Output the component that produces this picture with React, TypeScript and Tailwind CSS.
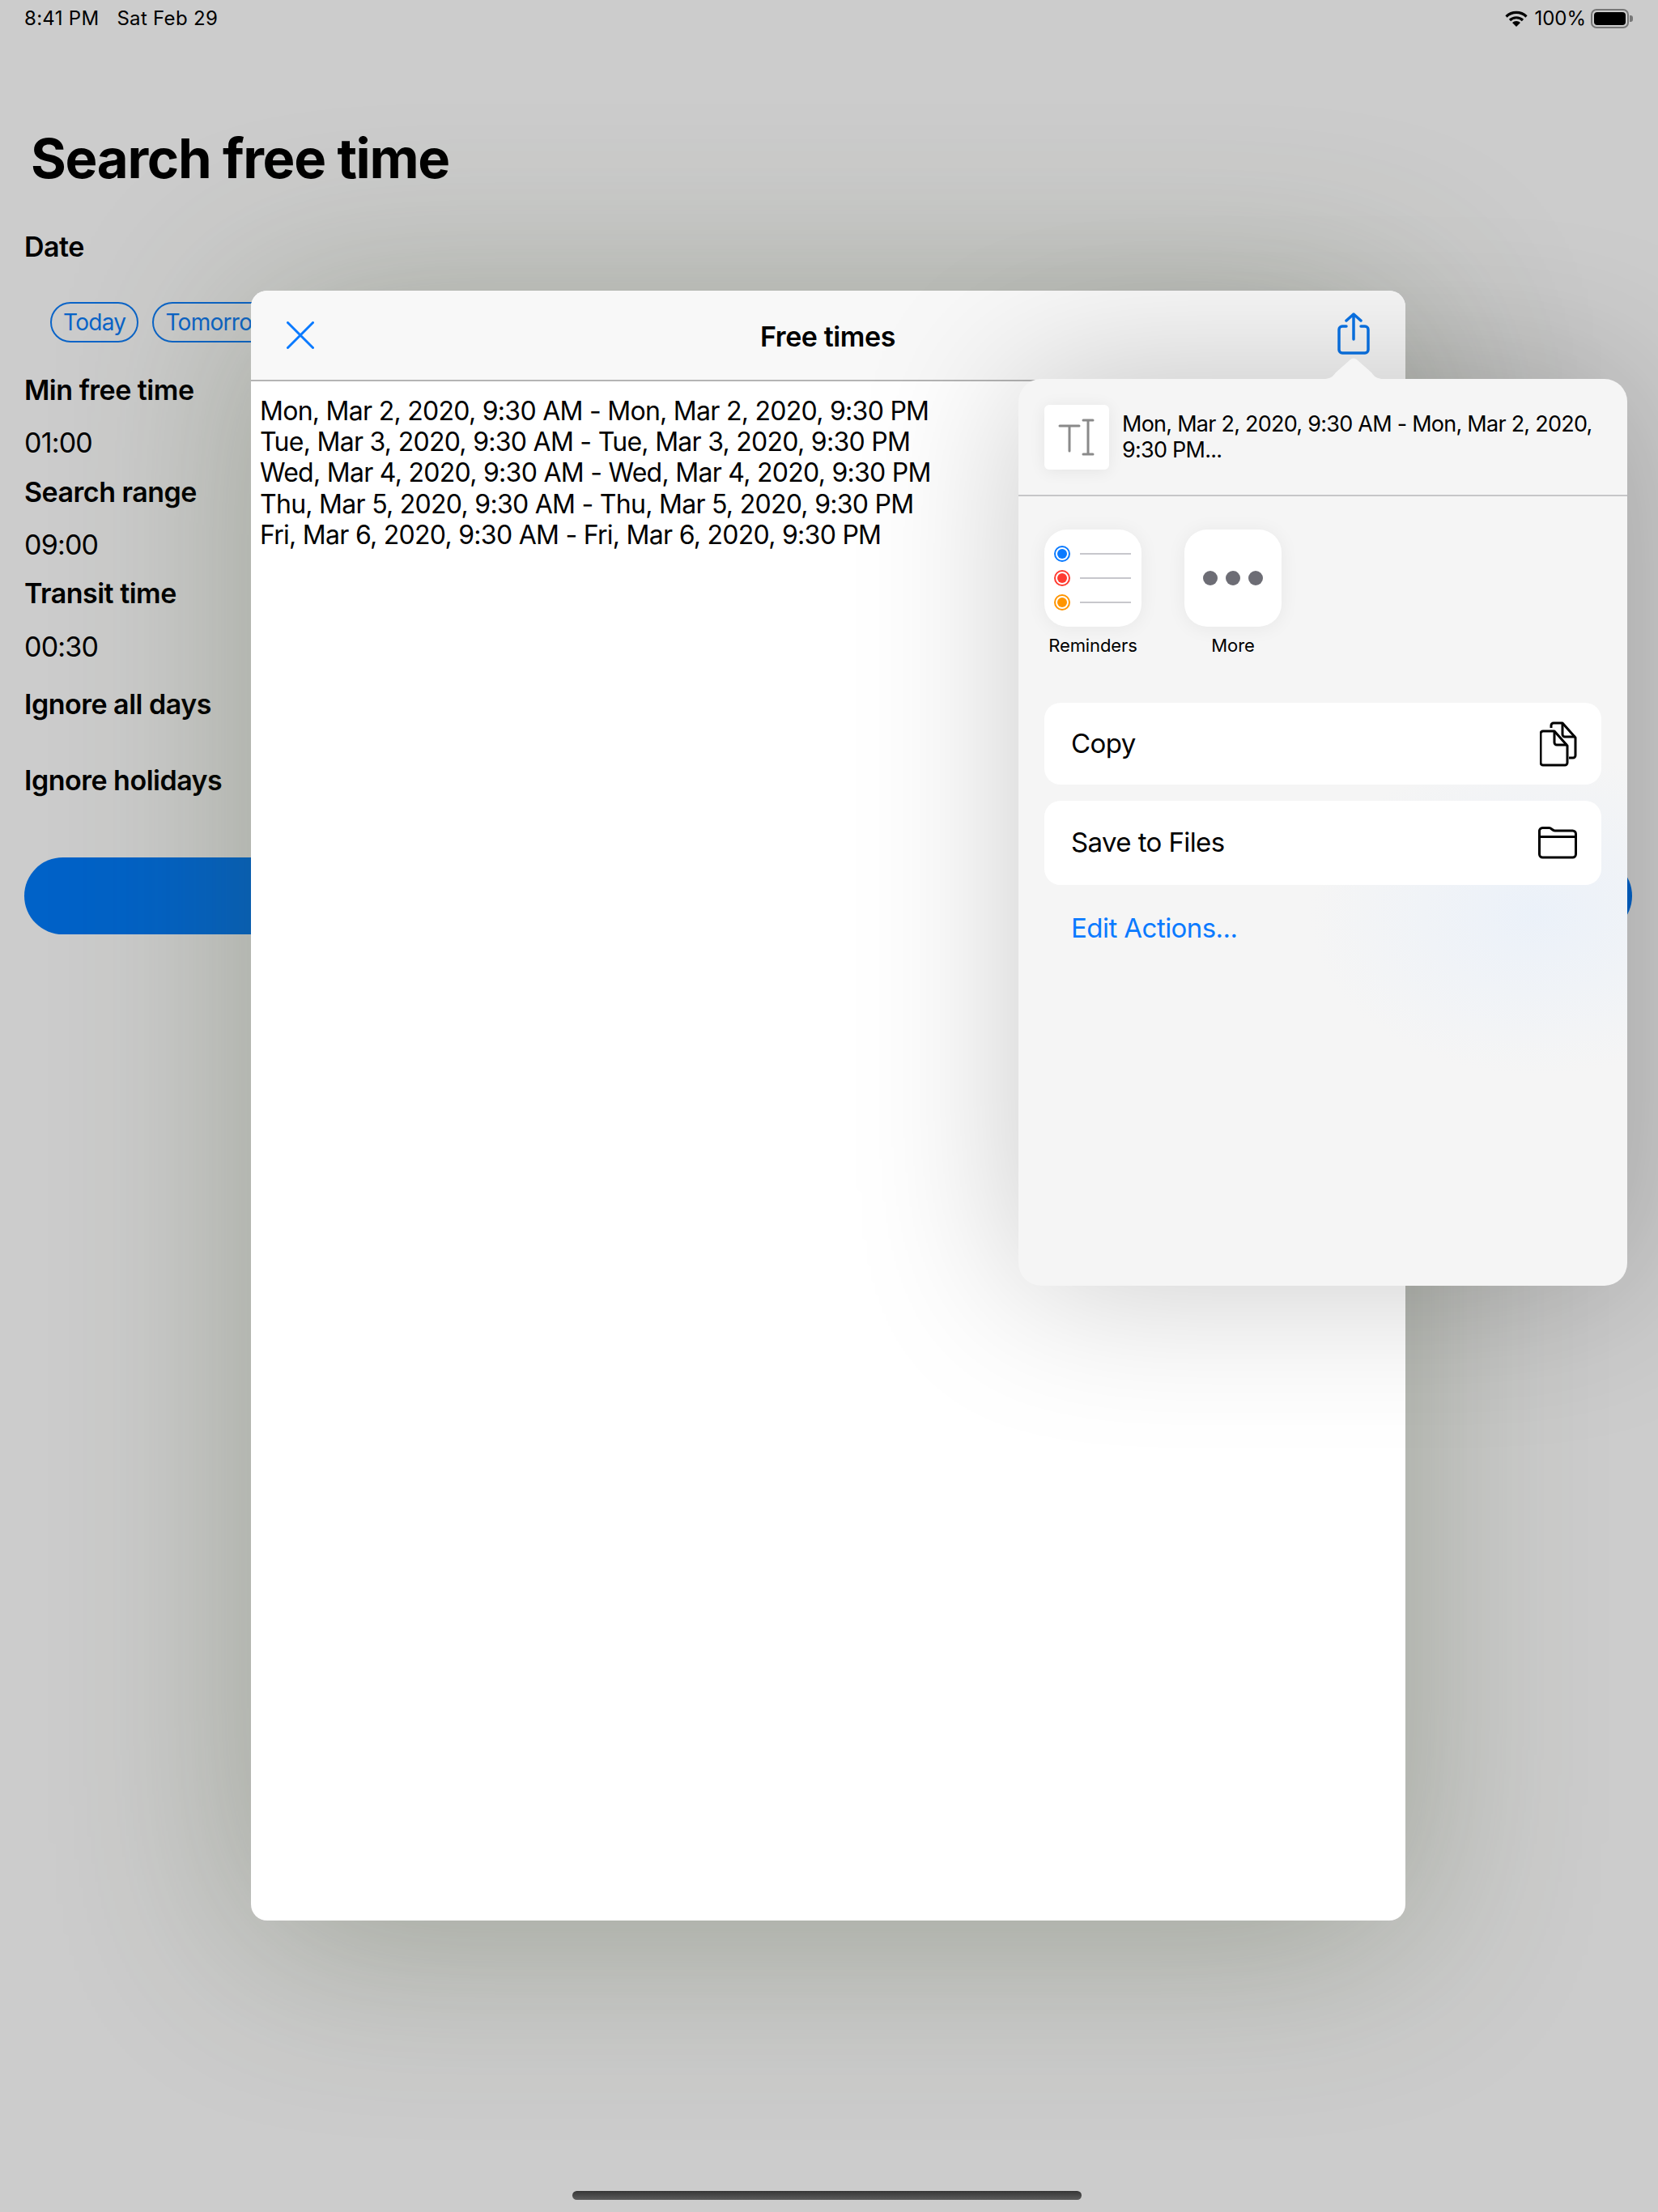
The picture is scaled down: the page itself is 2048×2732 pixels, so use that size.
const FONT = "font-['Inter','Liberation_Sans',sans-serif]";

const TIMES = [
  "Mon, Mar 2, 2020, 9:30 AM - Mon, Mar 2, 2020, 9:30 PM",
  "Tue, Mar 3, 2020, 9:30 AM - Tue, Mar 3, 2020, 9:30 PM",
  "Wed, Mar 4, 2020, 9:30 AM - Wed, Mar 4, 2020, 9:30 PM",
  "Thu, Mar 5, 2020, 9:30 AM - Thu, Mar 5, 2020, 9:30 PM",
  "Fri, Mar 6, 2020, 9:30 AM - Fri, Mar 6, 2020, 9:30 PM",
];

function WifiIcon() {
  return (
    <svg width="28" height="20" viewBox="0 0 28 20" fill="none" stroke="#000">
      <path d="M1.5 7.5A18 18 0 0 1 26.5 7.5" strokeWidth="3.2" />
      <path d="M6 12A11.5 11.5 0 0 1 22 12" strokeWidth="3.2" />
      <path d="M14 20L9 15A7 7 0 0 1 19 15Z" fill="#000" stroke="none" />
    </svg>
  );
}

function Battery() {
  return (
    <div className="flex items-center">
      <div className="flex h-[24px] w-[47px] rounded-[7px] border-2 border-[#777] p-[2px]">
        <div className="flex-1 rounded-[4px] bg-black" />
      </div>
      <div className="ml-[1px] h-[8px] w-[4px] rounded-r-[3px] bg-[#777]" />
    </div>
  );
}

function StatusBar() {
  return (
    <div className="flex h-[46px] items-center justify-between pl-[30px] pr-[31px] text-[24px] text-black">
      <div className="flex gap-[22px] tracking-[0.3px]">
        <span>8:41 PM</span>
        <span>Sat Feb 29</span>
      </div>
      <div className="flex items-center">
        <WifiIcon />
        <span className="ml-[8px] mr-[6px]">100%</span>
        <Battery />
      </div>
    </div>
  );
}

function Label({ text, className }: { text: string; className: string }) {
  return <div className={`text-[34px] font-semibold leading-[40px] tracking-[-0.5px] text-black ${className}`}>{text}</div>;
}

function Value({ text, className }: { text: string; className: string }) {
  return <div className={`text-[34px] leading-[40px] tracking-[-0.8px] text-black ${className}`}>{text}</div>;
}

function Chip({ text }: { text: string }) {
  return (
    <div className="flex h-[50px] items-center whitespace-nowrap rounded-full border-2 border-[#0a64c8] px-[14px] text-[28px] tracking-[-0.7px] text-[#0a64c8]">
      {text}
    </div>
  );
}

function SearchForm() {
  return (
    <div className="pl-[30px]">
      <h1 className="mt-[110px] pl-[8px] text-[67px] font-bold leading-[80px] tracking-[-1.3px] text-black">Search free time</h1>
      <Label text="Date" className="mt-[49px]" />
      <div className="ml-[32px] mt-[48px] flex gap-[17px]">
        <Chip text="Today" />
        <Chip text="Tomorrow" />
      </div>
      <Label text="Min free time" className="mt-[39px]" />
      <Value text="01:00" className="mt-[25px]" />
      <Label text="Search range" className="mt-[21px]" />
      <Value text="09:00" className="mt-[25px]" />
      <Label text="Transit time" className="mt-[20px]" />
      <Value text="00:30" className="mt-[26px]" />
      <Label text="Ignore all days" className="mt-[31px]" />
      <Label text="Ignore holidays" className="mt-[54px]" />
      <div className="mr-[32px] mt-[75px] h-[95px] rounded-full bg-[#0062c8]" />
    </div>
  );
}

function ShareIcon() {
  return (
    <svg width="42" height="52" viewBox="0 0 42 52" fill="none" stroke="#0a74e8" strokeWidth="3.5" strokeLinecap="round" strokeLinejoin="round">
      <path d="M12 17H7a4 4 0 0 0-4 4v25a4 4 0 0 0 4 4h28a4 4 0 0 0 4-4V21a4 4 0 0 0-4-4h-5" />
      <path d="M21 33V2M12 10l9-8 9 8" />
    </svg>
  );
}

function FreeTimesModal() {
  return (
    <div className="absolute left-[310px] top-[359px] h-[2013px] w-[1426px] overflow-hidden rounded-[20px] bg-white shadow-[0_20px_240px_rgba(60,75,40,0.33)]">
      <div className="flex h-[112px] items-center justify-between border-b-2 border-[#b4b4b4] bg-[#f8f8f8] pl-[44px] pr-[43px]">
        <div className="w-[40px]">
          <svg width="34" height="34" viewBox="0 0 34 34" stroke="#0a7aff" strokeWidth="3" strokeLinecap="round">
            <path d="M1.5 1.5L32.5 32.5M32.5 1.5L1.5 32.5" />
          </svg>
        </div>
        <div className="pt-[2px] text-[34px] font-semibold tracking-[-0.4px] text-black">Free times</div>
        <div className="mt-[-5px]">
          <ShareIcon />
        </div>
      </div>
      <div className="pl-[11px] pt-[18px] text-[32px] leading-[38.2px] tracking-[-0.72px] text-black">
        {TIMES.map((t) => (
          <div key={t}>{t}</div>
        ))}
      </div>
    </div>
  );
}

function ReminderRow({ color }: { color: string }) {
  return (
    <div className="flex items-center gap-[12px]">
      <svg width="20" height="20" viewBox="0 0 20 20">
        <circle cx="10" cy="10" r="9" fill="none" stroke={color} strokeWidth="2" />
        <circle cx="10" cy="10" r="6" fill={color} />
      </svg>
      <div className="h-[2px] w-[63px] bg-[#c7c7cc]" />
    </div>
  );
}

function AppTile({ label, children }: { label: string; children: React.ReactNode }) {
  return (
    <div className="flex w-[120px] flex-col items-center">
      <div className="flex h-[120px] w-[120px] flex-col justify-center rounded-[28px] bg-white shadow-[0_2px_24px_rgba(0,0,0,0.06)]">
        {children}
      </div>
      <div className="mt-[9px] whitespace-nowrap text-[22px] leading-[28px] tracking-[-0.1px] text-black">{label}</div>
    </div>
  );
}

function CopyIcon() {
  return (
    <svg width="46" height="56" viewBox="0 0 46 56" fill="none" stroke="#000" strokeWidth="3" strokeLinejoin="round">
      <path d="M14 8V5a3 3 0 0 1 3-3h11l16 18v22a3 3 0 0 1-3 3h-5" />
      <path d="M28 2v14a3 3 0 0 0 3 3h13" />
      <path d="M4 12h14l16 18v21a3 3 0 0 1-3 3H4a3 3 0 0 1-3-3V15a3 3 0 0 1 3-3Z" fill="#fff" />
      <path d="M18 12v14a3 3 0 0 0 3 3h13" />
    </svg>
  );
}

function FolderIcon() {
  return (
    <svg width="48" height="40" viewBox="0 0 48 40" fill="none" stroke="#000" strokeWidth="3" strokeLinejoin="round">
      <path d="M1.5 6a4 4 0 0 1 4-4.500h8c3 0 4 3.500 7 3.500h22a4 4 0 0 1 4 4v25a4 4 0 0 1-4 4h-37a4 4 0 0 1-4-4Z" />
      <path d="M1.500 12.500h45" />
    </svg>
  );
}

function ActionRow({ text, className, children }: { text: string; className: string; children: React.ReactNode }) {
  return (
    <div className={`flex items-center justify-between rounded-[20px] bg-white pl-[33px] pr-[30px] text-[33px] tracking-[-0.6px] text-black ${className}`}>
      <span>{text}</span>
      {children}
    </div>
  );
}

function SharePopover() {
  return (
    <div className="absolute left-[1258px] top-[468px] h-[1120px] w-[752px] rounded-[28px] bg-[#f5f5f5] bg-[radial-gradient(ellipse_280px_200px_at_640px_660px,#ebf1f9,transparent)] shadow-[0_0_200px_rgba(0,0,0,0.22)]">
      <svg className="absolute left-[374px] top-[-26px]" width="80" height="28" viewBox="0 0 80 28" fill="#f5f5f5">
        <path d="M0 28V26h3c7 0 11-2 15-8L35 3c2.500-3.500 7.500-3.500 10 0l17 15c4 6 8 8 15 8h3v2Z" />
      </svg>
      <div className="flex h-[145px] items-center border-b-2 border-[#c6c6c8] pl-[32px]">
        <div className="flex h-[80px] w-[80px] shrink-0 items-center justify-center rounded-[6px] bg-white shadow-[0_2px_20px_rgba(0,0,0,0.07)]">
          <svg width="46" height="46" viewBox="0 0 46 46" fill="none" stroke="#8a8a8a" strokeWidth="3" strokeLinecap="round">
            <path d="M2 9h24M14 9v31" />
            <path d="M31 2h12M37 2v42M31 44h12" />
          </svg>
        </div>
        <div className="ml-[16px] whitespace-nowrap text-[27px] leading-[32px] tracking-[-0.75px] text-black">
          Mon, Mar 2, 2020, 9:30 AM - Mon, Mar 2, 2020,
          <br />
          9:30 PM...
        </div>
      </div>
      <div className="ml-[32px] mt-[41px] flex gap-[53px]">
        <AppTile label="Reminders">
          <div className="flex flex-col gap-[10px] pl-[12px]">
            <ReminderRow color="#0a7aff" />
            <ReminderRow color="#ff3b30" />
            <ReminderRow color="#ff9500" />
          </div>
        </AppTile>
        <AppTile label="More">
          <div className="flex justify-center gap-[10px]">
            <div className="h-[18px] w-[18px] rounded-full bg-[#6d6d75]" />
            <div className="h-[18px] w-[18px] rounded-full bg-[#6d6d75]" />
            <div className="h-[18px] w-[18px] rounded-full bg-[#6d6d75]" />
          </div>
        </AppTile>
      </div>
      <div className="mx-[32px] mt-[57px] flex flex-col gap-[20px]">
        <ActionRow text="Copy" className="h-[101px]">
          <CopyIcon />
        </ActionRow>
        <ActionRow text="Save to Files" className="h-[104px]">
          <FolderIcon />
        </ActionRow>
      </div>
      <div className="ml-[65px] mt-[31px] text-[33px] leading-[44px] tracking-[-0.55px] text-[#0a7aff]">Edit Actions...</div>
    </div>
  );
}

export default function App() {
  return (
    <div className={`${FONT} relative h-[2732px] w-[2048px] overflow-hidden bg-[#cccccc]`}>
      <StatusBar />
      <SearchForm />
      <FreeTimesModal />
      <SharePopover />
      <div className="absolute left-[707px] top-[2706px] h-[11px] w-[629px] rounded-full bg-gradient-to-b from-[#363636] to-[#5c5c5c]" />
    </div>
  );
}
